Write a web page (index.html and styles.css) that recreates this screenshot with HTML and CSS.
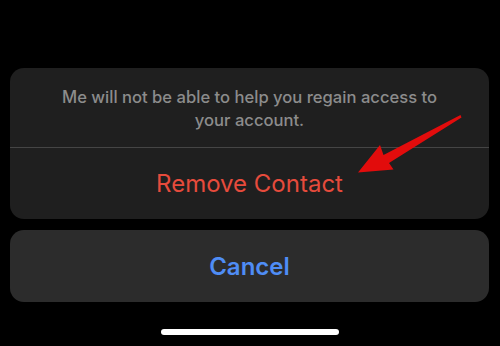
FILE: index.html
```html
<!DOCTYPE html>
<html>
<head>
<meta charset="utf-8">
<link rel="stylesheet" href="styles.css">
</head>
<body>
<div class="screen">
  <div class="sheet">
    <div class="group">
      <p class="message">Me will not be able to help you regain access to your account.</p>
      <div class="sep"></div>
      <div class="action destructive">Remove Contact</div>
    </div>
    <div class="group cancel-group">
      <div class="action cancel">Cancel</div>
    </div>
  </div>
  <div class="home-bar"><div class="home-indicator"></div></div>
  <svg class="arrow" width="500" height="346" viewBox="0 0 500 346">
    <polygon points="358,172.5 380,145 383.5,155 460.5,115 461.5,117.5 389,163 393.5,169.5" fill="#e20c0c"/>
  </svg>
</div>
</body>
</html>
```
FILE: styles.css
```css
html, body {
  margin: 0;
  padding: 0;
  background: #000;
}
.screen {
  position: relative;
  width: 500px;
  height: 346px;
  overflow: hidden;
  font-family: Inter, "Noto Sans", sans-serif;
  display: flex;
  flex-direction: column;
}
.sheet {
  padding: 68px 11px 0 10px;
  display: flex;
  flex-direction: column;
  gap: 11px;
}
.group {
  background: #1f1f1f;
  border-radius: 14px;
  display: flex;
  flex-direction: column;
}
.message {
  margin: 0;
  padding: 18px 36px 15px;
  text-align: center;
  color: #8c8c8c;
  font-size: 16.6px;
  font-weight: 500;
  line-height: 23px;
}
.sep {
  height: 1px;
  background: #454545;
}
.action {
  height: 71px;
  display: flex;
  align-items: center;
  justify-content: center;
  font-size: 24px;
}
.destructive {
  color: #e64b3c;
  font-weight: 400;
}
.cancel-group {
  background: #2c2c2c;
}
.cancel {
  height: 72px;
  color: #4f8df5;
  font-weight: 600;
}
.home-bar {
  display: flex;
  justify-content: center;
  padding-top: 27px;
}
.home-indicator {
  width: 178px;
  height: 6px;
  border-radius: 3px;
  background: #fff;
}
.arrow {
  position: absolute;
  left: 0;
  top: 0;
}
```
